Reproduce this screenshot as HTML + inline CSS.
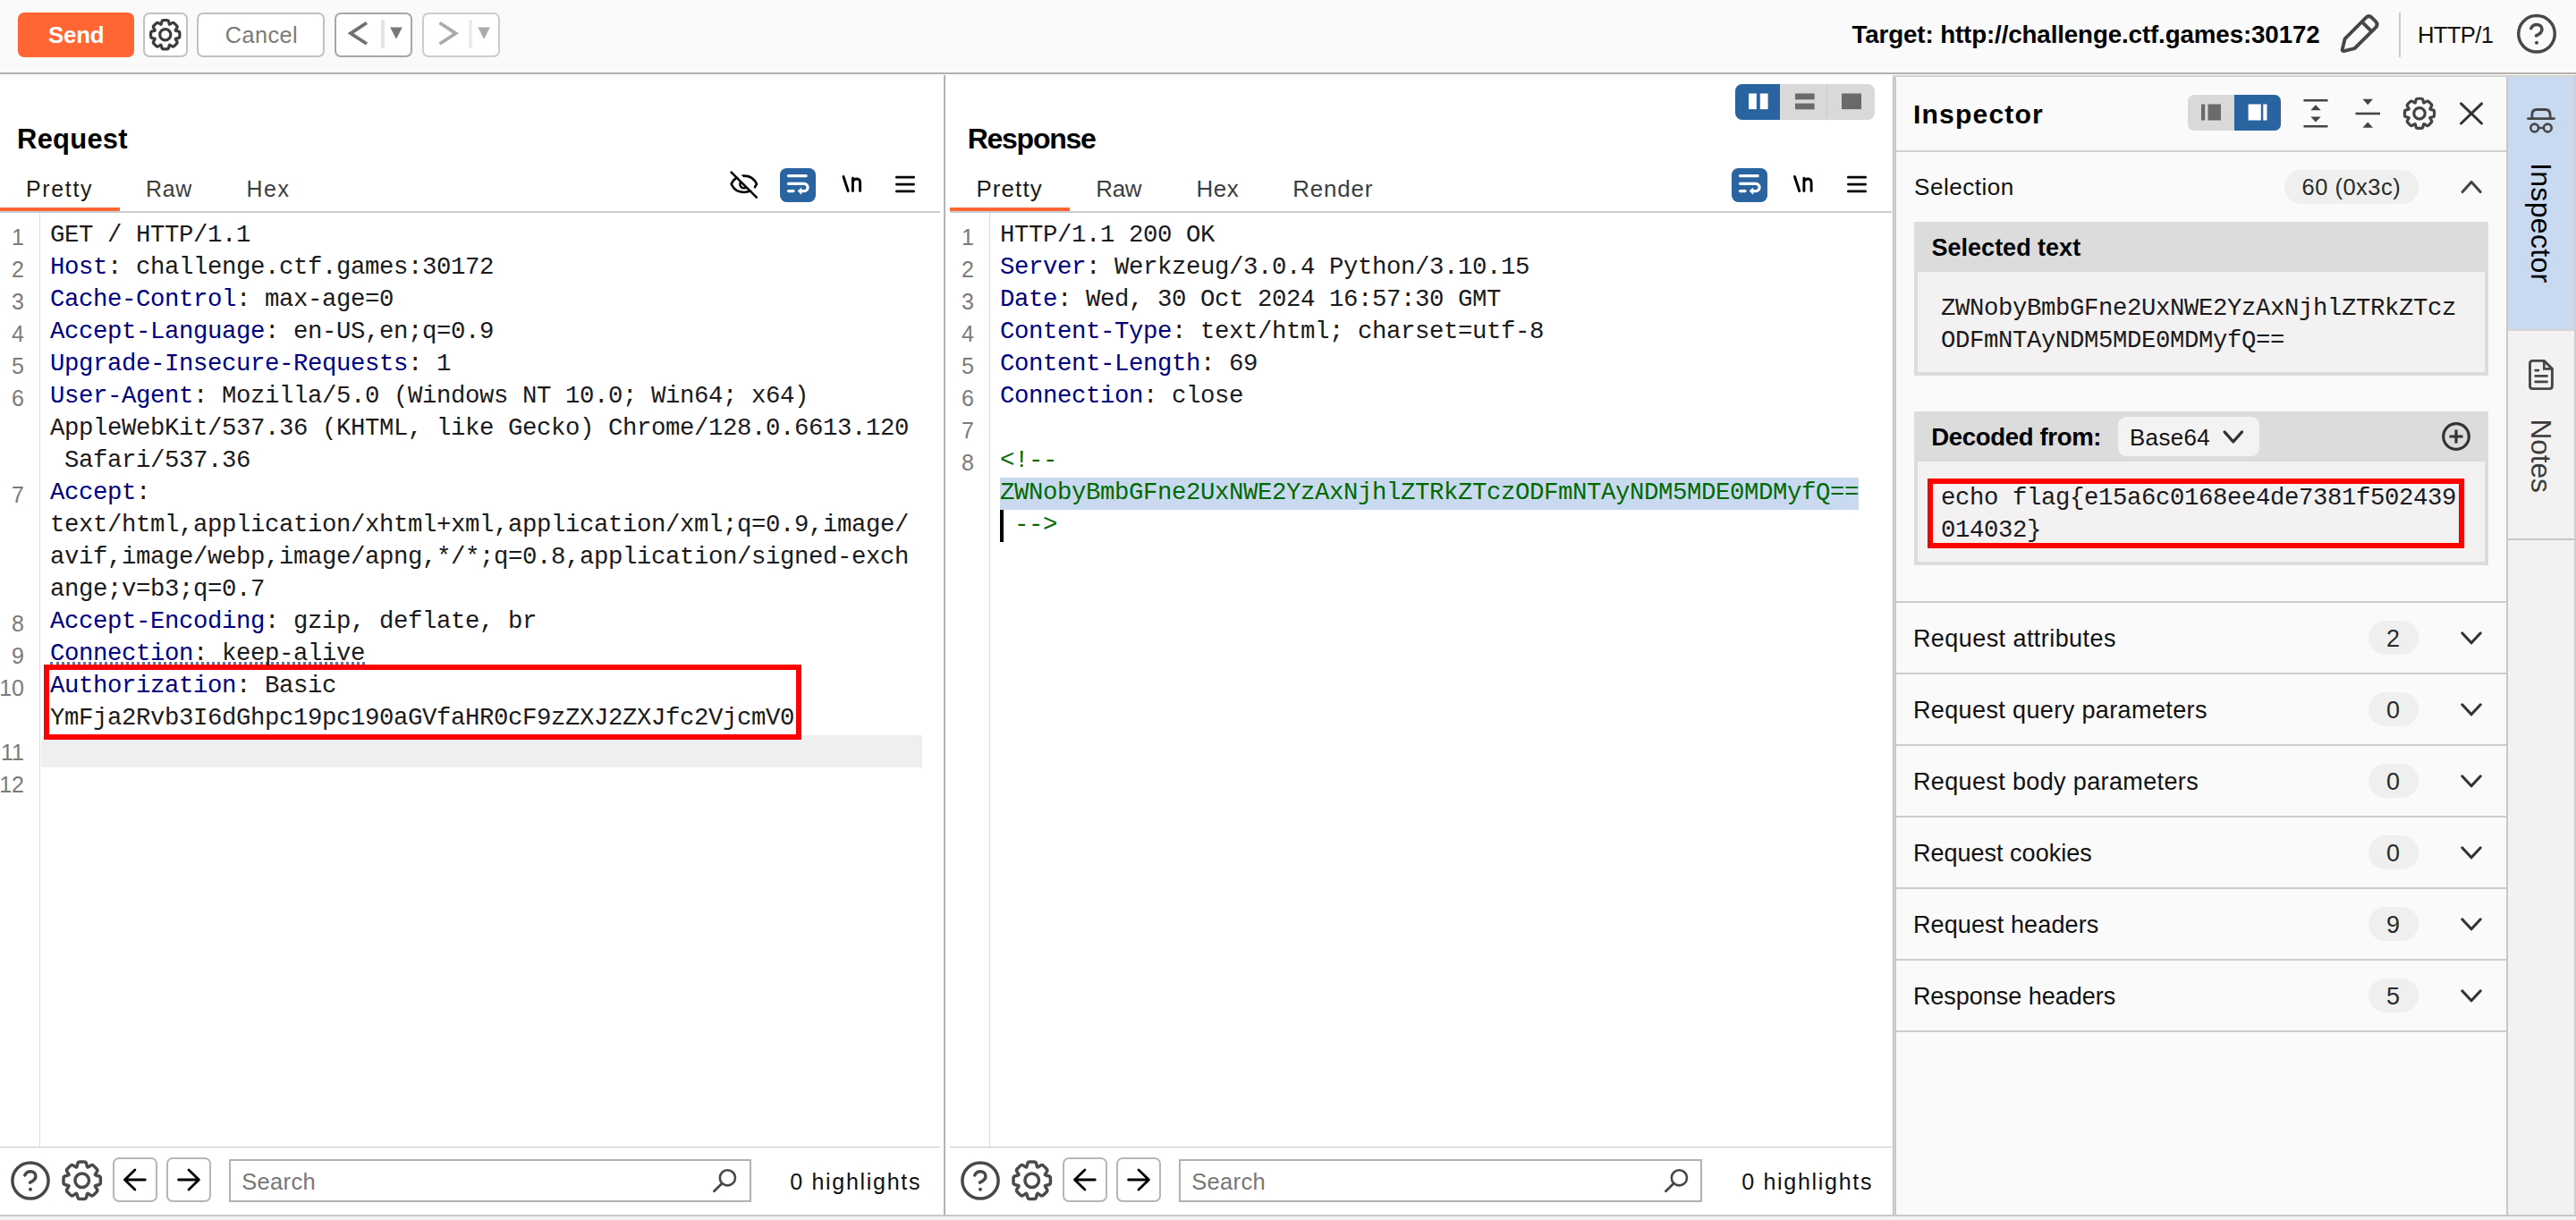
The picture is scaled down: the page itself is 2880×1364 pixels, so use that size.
<!DOCTYPE html>
<html><head><meta charset="utf-8">
<style>
*{box-sizing:border-box;margin:0;padding:0}
html,body{width:2880px;height:1364px;overflow:hidden;background:#fff;font-family:"Liberation Sans",sans-serif;color:#000}
.a{position:absolute}
.btn{position:absolute;border:2px solid #c4c0c0;border-radius:7px;background:#fff}
svg text{font-family:"Liberation Sans",sans-serif}
#ov{position:absolute;left:0;top:0;width:2880px;height:1364px}
</style></head><body>
<!-- TOOLBAR -->
<div class="a" style="left:0;top:0;width:2880px;height:80px;background:#fafafa"></div>
<div class="a" style="left:0;top:81px;width:2880px;height:2px;background:#b5b0b0"></div>
<div class="a" style="left:20px;top:14px;width:130px;height:50px;background:#ff6633;border-radius:7px"></div>
<div class="btn" style="left:160px;top:14px;width:50px;height:50px"></div>
<div class="btn" style="left:220px;top:14px;width:143px;height:50px"></div>
<div class="btn" style="left:374px;top:14px;width:87px;height:50px;border-color:#aaa6a6"></div>
<div class="btn" style="left:472px;top:14px;width:87px;height:50px;border-color:#d0cccc"></div>
<div class="a" style="left:2682px;top:14px;width:2px;height:50px;background:#cccccc"></div>

<!-- DIVIDER -->
<div class="a" style="left:1055px;top:84px;width:2px;height:1274px;background:#b8b3b3"></div>

<!-- REQUEST -->
<div class="a" style="left:0;top:232px;width:134px;height:4px;background:#ff6633"></div>
<div class="a" style="left:0;top:236px;width:1051px;height:2px;background:#c8cdcf"></div>
<div class="a" style="left:44px;top:238px;width:1px;height:1044px;background:#dcdcdc"></div>
<div class="a" style="left:46px;top:822px;width:985px;height:36px;background:#efefef"></div>
<div class="a" style="left:56px;top:740px;width:352px;height:3px;border-top:3px dotted #6070b0"></div>
<div class="a" style="left:49px;top:743px;width:847px;height:84px;border:6px solid #ff0000"></div>
<div class="a" style="left:0;top:1282px;width:1051px;height:1px;background:#c8c8c8"></div>
<div class="btn" style="left:126px;top:1294px;width:50px;height:50px;border-color:#bab5b5"></div>
<div class="btn" style="left:186px;top:1294px;width:50px;height:50px;border-color:#bab5b5"></div>
<div class="a" style="left:256px;top:1296px;width:584px;height:48px;border:2px solid #b5b0b0;background:#fff"></div>

<!-- RESPONSE -->
<div class="a" style="left:1940px;top:94px;width:156px;height:40px;background:#d9d9d9;border-radius:8px;overflow:hidden">
  <div class="a" style="left:0;top:0;width:50px;height:40px;background:#2a64a0"></div>
  <div class="a" style="left:102px;top:0;width:1px;height:40px;background:#c8c8c8"></div>
</div>
<div class="a" style="left:1062px;top:232px;width:134px;height:4px;background:#ff6633"></div>
<div class="a" style="left:1062px;top:236px;width:1053px;height:2px;background:#c8cdcf"></div>
<div class="a" style="left:1106px;top:238px;width:1px;height:1044px;background:#dcdcdc"></div>
<div class="a" style="left:1118px;top:534px;width:960px;height:36px;background:#c9d9ef"></div>
<div class="a" style="left:1118px;top:570px;width:4px;height:36px;background:#000"></div>
<div class="a" style="left:1062px;top:1282px;width:1053px;height:1px;background:#c8c8c8"></div>
<div class="btn" style="left:1188px;top:1294px;width:50px;height:50px;border-color:#bab5b5"></div>
<div class="btn" style="left:1248px;top:1294px;width:50px;height:50px;border-color:#bab5b5"></div>
<div class="a" style="left:1318px;top:1296px;width:585px;height:48px;border:2px solid #b5b0b0;background:#fff"></div>

<!-- INSPECTOR -->
<div class="a" style="left:2119px;top:84px;width:684px;height:1274px;background:#fafafa"></div>
<div class="a" style="left:2116px;top:84px;width:1px;height:1274px;background:#bcb8b8"></div><div class="a" style="left:2117px;top:84px;width:1px;height:1274px;background:#dcdcdc"></div><div class="a" style="left:2118px;top:84px;width:2px;height:1274px;background:#c8c8cc"></div>
<div class="a" style="left:2120px;top:168px;width:683px;height:2px;background:#d0d0d0"></div>
<div class="a" style="left:2446px;top:106px;width:104px;height:40px;background:#d9d9d9;border-radius:7px;overflow:hidden">
  <div class="a" style="left:52px;top:0;width:52px;height:40px;background:#2a64a0"></div>
</div>
<div class="a" style="left:2554px;top:190px;width:150px;height:38px;background:#efefef;border-radius:19px"></div>
<div class="a" style="left:2140px;top:248px;width:642px;height:172px;background:#dcdcdc"></div>
<div class="a" style="left:2144px;top:304px;width:634px;height:112px;background:#f3f1f1"></div>
<div class="a" style="left:2140px;top:460px;width:642px;height:172px;background:#dcdcdc"></div>
<div class="a" style="left:2144px;top:516px;width:634px;height:112px;background:#f3f1f1"></div>
<div class="a" style="left:2368px;top:466px;width:158px;height:44px;background:#f4f3f3;border-radius:9px"></div>
<div class="a" style="left:2155px;top:535px;width:600px;height:78px;border:6px solid #ff0000"></div>
<div class="a" style="left:2120px;top:672px;width:683px;height:2px;background:#cccccc"></div>
<div class="a" style="left:2120px;top:752px;width:683px;height:2px;background:#cccccc"></div>
<div class="a" style="left:2120px;top:832px;width:683px;height:2px;background:#cccccc"></div>
<div class="a" style="left:2120px;top:912px;width:683px;height:2px;background:#cccccc"></div>
<div class="a" style="left:2120px;top:992px;width:683px;height:2px;background:#cccccc"></div>
<div class="a" style="left:2120px;top:1072px;width:683px;height:2px;background:#cccccc"></div>
<div class="a" style="left:2120px;top:1152px;width:683px;height:2px;background:#cccccc"></div>
<div class="a" style="left:2648px;top:694px;width:56px;height:38px;background:#efefef;border-radius:19px"></div>
<div class="a" style="left:2648px;top:774px;width:56px;height:38px;background:#efefef;border-radius:19px"></div>
<div class="a" style="left:2648px;top:854px;width:56px;height:38px;background:#efefef;border-radius:19px"></div>
<div class="a" style="left:2648px;top:934px;width:56px;height:38px;background:#efefef;border-radius:19px"></div>
<div class="a" style="left:2648px;top:1014px;width:56px;height:38px;background:#efefef;border-radius:19px"></div>
<div class="a" style="left:2648px;top:1094px;width:56px;height:38px;background:#efefef;border-radius:19px"></div>

<!-- STRIP -->
<div class="a" style="left:2802px;top:84px;width:78px;height:1274px;background:#f3f1f2"></div>
<div class="a" style="left:2802px;top:84px;width:2px;height:1274px;background:#c8c8c8"></div>
<div class="a" style="left:2878px;top:84px;width:2px;height:1274px;background:#cfcfcf"></div>
<div class="a" style="left:2804px;top:85px;width:74px;height:283px;background:#c8d9f0"></div>
<div class="a" style="left:2804px;top:368px;width:74px;height:2px;background:#d6d6d6"></div>
<div class="a" style="left:2804px;top:602px;width:74px;height:2px;background:#c8c8c8"></div>

<div class="a" style="left:2116px;top:84px;width:764px;height:2px;background:#d2d2d2"></div>
<div class="a" style="left:0;top:1358px;width:2880px;height:2px;background:#c8c8c8"></div>
<div class="a" style="left:0;top:1360px;width:2880px;height:4px;background:#f3f3f3"></div>

<svg id="ov" width="2880" height="1364" viewBox="0 0 2880 1364">
<path d="M180.04,27.37 Q180.33,27.24 180.64,25.56 L180.87,24.29 Q181.17,22.61 182.89,22.61 L186.61,22.61 Q188.33,22.61 188.63,24.29 L188.86,25.56 Q189.17,27.24 189.46,27.37 L189.46,27.37 Q189.76,27.49 191.17,26.51 L192.23,25.78 Q193.63,24.8 194.85,26.02 L197.48,28.65 Q198.7,29.87 197.72,31.27 L196.99,32.33 Q196.01,33.74 196.13,34.04 L196.13,34.04 Q196.26,34.33 197.94,34.64 L199.21,34.87 Q200.89,35.17 200.89,36.89 L200.89,40.61 Q200.89,42.33 199.21,42.63 L197.94,42.86 Q196.26,43.17 196.13,43.46 L196.13,43.46 Q196.01,43.76 196.99,45.17 L197.72,46.23 Q198.7,47.63 197.48,48.85 L194.85,51.48 Q193.63,52.7 192.23,51.72 L191.17,50.99 Q189.76,50.01 189.46,50.13 L189.46,50.13 Q189.17,50.26 188.86,51.94 L188.63,53.21 Q188.33,54.89 186.61,54.89 L182.89,54.89 Q181.17,54.89 180.87,53.21 L180.64,51.94 Q180.33,50.26 180.04,50.13 L180.04,50.13 Q179.74,50.01 178.33,50.99 L177.27,51.72 Q175.87,52.7 174.65,51.48 L172.02,48.85 Q170.8,47.63 171.78,46.23 L172.51,45.17 Q173.49,43.76 173.37,43.46 L173.37,43.46 Q173.24,43.17 171.56,42.86 L170.29,42.63 Q168.61,42.33 168.61,40.61 L168.61,36.89 Q168.61,35.17 170.29,34.87 L171.56,34.64 Q173.24,34.33 173.37,34.04 L173.37,34.04 Q173.49,33.74 172.51,32.33 L171.78,31.27 Q170.8,29.87 172.02,28.65 L174.65,26.02 Q175.87,24.8 177.27,25.78 L178.33,26.51 Q179.74,27.49 180.04,27.37 Z" fill="none" stroke="#3c3c3c" stroke-width="3.2" stroke-linejoin="round"/><circle cx="184.75" cy="38.75" r="6.08" fill="none" stroke="#3c3c3c" stroke-width="3.2"/>
<path d="M410,25.5 L392,37.3 L410,49" fill="none" stroke="#707070" stroke-width="3.8"/>
<rect x="426" y="22" width="4" height="32" fill="#e4e4e4"/>
<path d="M436.2,30.5 L449.8,30.5 L443,43.8 Z" fill="#787878"/>
<path d="M491.5,25.5 L509.5,37.3 L491.5,49" fill="none" stroke="#ababab" stroke-width="3.8"/>
<rect x="524" y="22" width="4" height="32" fill="#ececec"/>
<path d="M534.4,30.5 L547.8,30.5 L541.1,43.8 Z" fill="#ababab"/>
<g transform="translate(2636.7 39.1) rotate(45)"><path d="M-3.2,-24.3 L3.2,-24.3 Q7.7,-24.3 7.7,-19.8 L7.7,13.6 L1.2,24.2 Q0,25.6 -1.2,24.2 L-7.7,13.6 L-7.7,-19.8 Q-7.7,-24.3 -3.2,-24.3 Z" fill="none" stroke="#474747" stroke-width="3.9" stroke-linejoin="round"/><path d="M-7.7,-13.2 L7.7,-13.2" stroke="#474747" stroke-width="3.9"/></g>
<circle cx="2836" cy="37.8" r="20.3" fill="none" stroke="#484848" stroke-width="3.5"/><path d="M2829.71,31.71 C2831.33,28.26 2834.17,27.45 2836,27.45 C2839.65,27.45 2841.99,29.88 2841.99,32.93 C2841.99,36.48 2838.64,38.41 2835.49,39.93" fill="none" stroke="#484848" stroke-width="3.5" stroke-linecap="round" stroke-linejoin="round"/><circle cx="2836" cy="47.75" r="2.03" fill="#484848"/>
<path d="M817.6,205.8 C823,193.6 840.6,193.6 846,205.8 C840.6,218 823,218 817.6,205.8 Z" fill="none" stroke="#000" stroke-width="2.6" stroke-linejoin="round"/>
<path d="M819.9,190.2 L848.4,218.4" stroke="#fff" stroke-width="4.6"/>
<path d="M828.3,203.4 A4.3,4.3 0 0 0 834.6,209.2" fill="none" stroke="#000" stroke-width="2.6"/>
<path d="M817.6,192.6 L845.8,220.6" stroke="#000" stroke-width="2.6" stroke-linecap="round"/>
<rect x="872" y="188" width="40" height="38" rx="7.5" fill="#2a64a0"/><path d="M881.5,196.6 L901.2,196.6" stroke="#fff" stroke-width="3.2" stroke-linecap="round"/><path d="M881.5,205.3 L898.9,205.3 A4.15,4.15 0 0 1 898.9,213.6 L895,213.6" fill="none" stroke="#fff" stroke-width="3.2" stroke-linecap="round"/><path d="M881.5,213.6 L887,213.6" stroke="#fff" stroke-width="3.2" stroke-linecap="round"/><path d="M891.6,213.6 L896.2,209.6 L896.2,217.8 Z" fill="#fff"/>
<path d="M943,197.5 L948.2,213.5" stroke="#000" stroke-width="2.9" stroke-linecap="round"/><path d="M953.4,213.5 L953.4,199.2 M953.4,203 C954.6,199.4 961.6,198.2 961.6,204.5 L961.6,213.5" fill="none" stroke="#000" stroke-width="2.9" stroke-linecap="round" stroke-linejoin="round"/>
<path d="M1002.4,198.2 L1021.6,198.2" stroke="#000" stroke-width="2.8" stroke-linecap="round"/><path d="M1002.4,206.05 L1021.6,206.05" stroke="#000" stroke-width="2.8" stroke-linecap="round"/><path d="M1002.4,213.9 L1021.6,213.9" stroke="#000" stroke-width="2.8" stroke-linecap="round"/>
<rect x="1936" y="188" width="40" height="38" rx="7.5" fill="#2a64a0"/><path d="M1945.5,196.6 L1965.2,196.6" stroke="#fff" stroke-width="3.2" stroke-linecap="round"/><path d="M1945.5,205.3 L1962.9,205.3 A4.15,4.15 0 0 1 1962.9,213.6 L1959,213.6" fill="none" stroke="#fff" stroke-width="3.2" stroke-linecap="round"/><path d="M1945.5,213.6 L1951,213.6" stroke="#fff" stroke-width="3.2" stroke-linecap="round"/><path d="M1955.6,213.6 L1960.2,209.6 L1960.2,217.8 Z" fill="#fff"/>
<path d="M2006.5,197.5 L2011.7,213.5" stroke="#000" stroke-width="2.9" stroke-linecap="round"/><path d="M2016.9,213.5 L2016.9,199.2 M2016.9,203 C2018.1,199.4 2025.1,198.2 2025.1,204.5 L2025.1,213.5" fill="none" stroke="#000" stroke-width="2.9" stroke-linecap="round" stroke-linejoin="round"/>
<path d="M2066.4,198.2 L2085.6,198.2" stroke="#000" stroke-width="2.8" stroke-linecap="round"/><path d="M2066.4,206.05 L2085.6,206.05" stroke="#000" stroke-width="2.8" stroke-linecap="round"/><path d="M2066.4,213.9 L2085.6,213.9" stroke="#000" stroke-width="2.8" stroke-linecap="round"/>
<rect x="1955" y="104.5" width="8.8" height="17.6" fill="#fff"/><rect x="1967.8" y="104.5" width="8.8" height="17.6" fill="#fff"/>
<rect x="2007" y="104.5" width="21.6" height="6.8" fill="#6a6a6a"/><rect x="2007" y="115.6" width="21.6" height="6.7" fill="#6a6a6a"/>
<rect x="2059" y="104.5" width="22" height="17.6" fill="#6a6a6a"/>
<rect x="2461" y="116.5" width="4.2" height="18" fill="#6a6a6a"/><rect x="2468.5" y="116.5" width="14.5" height="18" fill="#6a6a6a"/>
<rect x="2513.6" y="116.5" width="14.2" height="18" fill="#fff"/><rect x="2530.3" y="116.5" width="4.2" height="18" fill="#fff"/>
<path d="M2575.5,112.3 L2602.5,112.3 M2575.5,141.3 L2602.5,141.3" stroke="#444" stroke-width="2.6"/><path d="M2583.3,123.2 L2589,117.2 L2594.7,123.2 Z M2583.3,130.5 L2589,136.5 L2594.7,130.5 Z" fill="#444"/>
<path d="M2633.5,127 L2661,127" stroke="#444" stroke-width="2.6"/><path d="M2641.5,110.8 L2653,110.8 L2647.2,117.2 Z M2641.5,142.8 L2653,142.8 L2647.2,136.4 Z" fill="#444"/>
<path d="M2700.16,115.13 Q2700.47,115 2700.78,113.27 L2701.02,111.97 Q2701.33,110.24 2703.09,110.24 L2706.91,110.24 Q2708.67,110.24 2708.98,111.97 L2709.22,113.27 Q2709.53,115 2709.84,115.13 L2709.84,115.13 Q2710.14,115.25 2711.59,114.25 L2712.67,113.5 Q2714.11,112.5 2715.36,113.74 L2718.06,116.44 Q2719.3,117.69 2718.3,119.13 L2717.55,120.21 Q2716.55,121.66 2716.67,121.96 L2716.67,121.96 Q2716.8,122.27 2718.53,122.58 L2719.83,122.82 Q2721.56,123.13 2721.56,124.89 L2721.56,128.71 Q2721.56,130.47 2719.83,130.78 L2718.53,131.02 Q2716.8,131.33 2716.67,131.64 L2716.67,131.64 Q2716.55,131.94 2717.55,133.39 L2718.3,134.47 Q2719.3,135.91 2718.06,137.16 L2715.36,139.86 Q2714.11,141.1 2712.67,140.1 L2711.59,139.35 Q2710.14,138.35 2709.84,138.47 L2709.84,138.47 Q2709.53,138.6 2709.22,140.33 L2708.98,141.63 Q2708.67,143.36 2706.91,143.36 L2703.09,143.36 Q2701.33,143.36 2701.02,141.63 L2700.78,140.33 Q2700.47,138.6 2700.16,138.47 L2700.16,138.47 Q2699.86,138.35 2698.41,139.35 L2697.33,140.1 Q2695.89,141.1 2694.64,139.86 L2691.94,137.16 Q2690.7,135.91 2691.7,134.47 L2692.45,133.39 Q2693.45,131.94 2693.33,131.64 L2693.33,131.64 Q2693.2,131.33 2691.47,131.02 L2690.17,130.78 Q2688.44,130.47 2688.44,128.71 L2688.44,124.89 Q2688.44,123.13 2690.17,122.82 L2691.47,122.58 Q2693.2,122.27 2693.33,121.96 L2693.33,121.96 Q2693.45,121.66 2692.45,120.21 L2691.7,119.13 Q2690.7,117.69 2691.94,116.44 L2694.64,113.74 Q2695.89,112.5 2697.33,113.5 L2698.41,114.25 Q2699.86,115.25 2700.16,115.13 Z" fill="none" stroke="#444" stroke-width="3.2" stroke-linejoin="round"/><circle cx="2705" cy="126.8" r="6.24" fill="none" stroke="#444" stroke-width="3.2"/>
<path d="M2751.5,115.8 L2774.5,138 M2774.5,115.8 L2751.5,138" stroke="#333" stroke-width="3" stroke-linecap="round"/>
<path d="M2753.1,214.5 L2763.1,203.5 L2773.1,214.5" fill="none" stroke="#444" stroke-width="3.1" stroke-linecap="round" stroke-linejoin="round"/>
<path d="M2487.05,482.9 L2496.8,493.9 L2506.55,482.9" fill="none" stroke="#333" stroke-width="3.2" stroke-linecap="round" stroke-linejoin="round"/>
<circle cx="2746" cy="488" r="14.3" fill="none" stroke="#333" stroke-width="3.2"/><path d="M2746,480.5 L2746,495.5 M2738.5,488 L2753.5,488" stroke="#333" stroke-width="3.2"/>
<path d="M2752.75,707.8 L2763,718.8 L2773.25,707.8" fill="none" stroke="#333" stroke-width="3.1" stroke-linecap="round" stroke-linejoin="round"/>
<path d="M2752.75,787.8 L2763,798.8 L2773.25,787.8" fill="none" stroke="#333" stroke-width="3.1" stroke-linecap="round" stroke-linejoin="round"/>
<path d="M2752.75,867.8 L2763,878.8 L2773.25,867.8" fill="none" stroke="#333" stroke-width="3.1" stroke-linecap="round" stroke-linejoin="round"/>
<path d="M2752.75,947.8 L2763,958.8 L2773.25,947.8" fill="none" stroke="#333" stroke-width="3.1" stroke-linecap="round" stroke-linejoin="round"/>
<path d="M2752.75,1027.8 L2763,1038.8 L2773.25,1027.8" fill="none" stroke="#333" stroke-width="3.1" stroke-linecap="round" stroke-linejoin="round"/>
<path d="M2752.75,1107.8 L2763,1118.8 L2773.25,1107.8" fill="none" stroke="#333" stroke-width="3.1" stroke-linecap="round" stroke-linejoin="round"/>
<path d="M2826.4,132.6 L2855.6,132.6" stroke="#474747" stroke-width="2.8" stroke-linecap="round"/><path d="M2830.9,132 L2830.9,127.5 Q2831.2,122.5 2836,122.5 L2846,122.5 Q2850.6,122.5 2851,127.5 L2851.3,132" fill="none" stroke="#474747" stroke-width="2.8"/><circle cx="2833.7" cy="143" r="4.4" fill="none" stroke="#474747" stroke-width="2.6"/><circle cx="2848.3" cy="143" r="4.4" fill="none" stroke="#474747" stroke-width="2.6"/><path d="M2838,143 L2844,143" stroke="#474747" stroke-width="2.4"/>
<path d="M2844.3,403.4 L2831.6,403.4 Q2828.5,403.4 2828.5,406.5 L2828.5,431.5 Q2828.5,434.6 2831.6,434.6 L2850.3,434.6 Q2853.4,434.6 2853.4,431.5 L2853.4,412.3 Z" fill="none" stroke="#474747" stroke-width="2.9" stroke-linejoin="round"/><path d="M2844.3,403.4 L2844.3,412.4 L2853.4,412.4" fill="none" stroke="#474747" stroke-width="2.7"/><path d="M2834.6,414.1 L2838,414.1 M2834.6,420.4 L2847.6,420.4 M2834.6,426.8 L2847.6,426.8" stroke="#474747" stroke-width="2.7" stroke-linecap="round"/>
<circle cx="34" cy="1320" r="20.1" fill="none" stroke="#484848" stroke-width="3.5"/><path d="M27.77,1313.97 C29.38,1310.55 32.19,1309.75 34,1309.75 C37.62,1309.75 39.93,1312.16 39.93,1315.18 C39.93,1318.69 36.61,1320.6 33.5,1322.11" fill="none" stroke="#484848" stroke-width="3.5" stroke-linecap="round" stroke-linejoin="round"/><circle cx="34" cy="1329.85" r="2.01" fill="#484848"/>
<path d="M85.66,1305.11 Q86.04,1304.95 86.43,1302.78 L86.72,1301.17 Q87.11,1299 89.31,1299 L94.09,1299 Q96.29,1299 96.68,1301.17 L96.97,1302.78 Q97.36,1304.95 97.74,1305.11 L97.74,1305.11 Q98.13,1305.27 99.93,1304.01 L101.28,1303.07 Q103.09,1301.82 104.65,1303.38 L108.02,1306.75 Q109.58,1308.31 108.33,1310.12 L107.39,1311.47 Q106.13,1313.27 106.29,1313.66 L106.29,1313.66 Q106.45,1314.04 108.62,1314.43 L110.23,1314.72 Q112.4,1315.11 112.4,1317.31 L112.4,1322.09 Q112.4,1324.29 110.23,1324.68 L108.62,1324.97 Q106.45,1325.36 106.29,1325.74 L106.29,1325.74 Q106.13,1326.13 107.39,1327.93 L108.33,1329.28 Q109.58,1331.09 108.02,1332.65 L104.65,1336.02 Q103.09,1337.58 101.28,1336.33 L99.93,1335.39 Q98.13,1334.13 97.74,1334.29 L97.74,1334.29 Q97.36,1334.45 96.97,1336.62 L96.68,1338.23 Q96.29,1340.4 94.09,1340.4 L89.31,1340.4 Q87.11,1340.4 86.72,1338.23 L86.43,1336.62 Q86.04,1334.45 85.66,1334.29 L85.66,1334.29 Q85.27,1334.13 83.47,1335.39 L82.12,1336.33 Q80.31,1337.58 78.75,1336.02 L75.38,1332.65 Q73.82,1331.09 75.07,1329.28 L76.01,1327.93 Q77.27,1326.13 77.11,1325.74 L77.11,1325.74 Q76.95,1325.36 74.78,1324.97 L73.17,1324.68 Q71,1324.29 71,1322.09 L71,1317.31 Q71,1315.11 73.17,1314.72 L74.78,1314.43 Q76.95,1314.04 77.11,1313.66 L77.11,1313.66 Q77.27,1313.27 76.01,1311.47 L75.07,1310.12 Q73.82,1308.31 75.38,1306.75 L78.75,1303.38 Q80.31,1301.82 82.12,1303.07 L83.47,1304.01 Q85.27,1305.27 85.66,1305.11 Z" fill="none" stroke="#4a4a4a" stroke-width="3.5" stroke-linejoin="round"/><circle cx="91.7" cy="1319.7" r="7.8" fill="none" stroke="#4a4a4a" stroke-width="3.5"/>
<path d="M162.3,1319 L139.5,1319 M150.9,1308 L139.5,1319 L150.9,1330" fill="none" stroke="#000" stroke-width="2.8" stroke-linecap="round" stroke-linejoin="round"/>
<path d="M199.6,1319 L222.4,1319 M211,1308 L222.4,1319 L211,1330" fill="none" stroke="#000" stroke-width="2.8" stroke-linecap="round" stroke-linejoin="round"/>
<circle cx="813.4" cy="1316.8" r="8.6" fill="none" stroke="#484848" stroke-width="2.6"/><path d="M807.3,1323 L798.4,1331.8" stroke="#484848" stroke-width="2.8" stroke-linecap="round"/>
<circle cx="1096" cy="1320" r="20.1" fill="none" stroke="#484848" stroke-width="3.5"/><path d="M1089.77,1313.97 C1091.38,1310.55 1094.19,1309.75 1096,1309.75 C1099.62,1309.75 1101.93,1312.16 1101.93,1315.18 C1101.93,1318.69 1098.61,1320.6 1095.5,1322.11" fill="none" stroke="#484848" stroke-width="3.5" stroke-linecap="round" stroke-linejoin="round"/><circle cx="1096" cy="1329.85" r="2.01" fill="#484848"/>
<path d="M1147.66,1305.11 Q1148.04,1304.95 1148.43,1302.78 L1148.72,1301.17 Q1149.11,1299 1151.31,1299 L1156.09,1299 Q1158.29,1299 1158.68,1301.17 L1158.97,1302.78 Q1159.36,1304.95 1159.74,1305.11 L1159.74,1305.11 Q1160.13,1305.27 1161.93,1304.01 L1163.28,1303.07 Q1165.09,1301.82 1166.65,1303.38 L1170.02,1306.75 Q1171.58,1308.31 1170.33,1310.12 L1169.39,1311.47 Q1168.13,1313.27 1168.29,1313.66 L1168.29,1313.66 Q1168.45,1314.04 1170.62,1314.43 L1172.23,1314.72 Q1174.4,1315.11 1174.4,1317.31 L1174.4,1322.09 Q1174.4,1324.29 1172.23,1324.68 L1170.62,1324.97 Q1168.45,1325.36 1168.29,1325.74 L1168.29,1325.74 Q1168.13,1326.13 1169.39,1327.93 L1170.33,1329.28 Q1171.58,1331.09 1170.02,1332.65 L1166.65,1336.02 Q1165.09,1337.58 1163.28,1336.33 L1161.93,1335.39 Q1160.13,1334.13 1159.74,1334.29 L1159.74,1334.29 Q1159.36,1334.45 1158.97,1336.62 L1158.68,1338.23 Q1158.29,1340.4 1156.09,1340.4 L1151.31,1340.4 Q1149.11,1340.4 1148.72,1338.23 L1148.43,1336.62 Q1148.04,1334.45 1147.66,1334.29 L1147.66,1334.29 Q1147.27,1334.13 1145.47,1335.39 L1144.12,1336.33 Q1142.31,1337.58 1140.75,1336.02 L1137.38,1332.65 Q1135.82,1331.09 1137.07,1329.28 L1138.01,1327.93 Q1139.27,1326.13 1139.11,1325.74 L1139.11,1325.74 Q1138.95,1325.36 1136.78,1324.97 L1135.17,1324.68 Q1133,1324.29 1133,1322.09 L1133,1317.31 Q1133,1315.11 1135.17,1314.72 L1136.78,1314.43 Q1138.95,1314.04 1139.11,1313.66 L1139.11,1313.66 Q1139.27,1313.27 1138.01,1311.47 L1137.07,1310.12 Q1135.82,1308.31 1137.38,1306.75 L1140.75,1303.38 Q1142.31,1301.82 1144.12,1303.07 L1145.47,1304.01 Q1147.27,1305.27 1147.66,1305.11 Z" fill="none" stroke="#4a4a4a" stroke-width="3.5" stroke-linejoin="round"/><circle cx="1153.7" cy="1319.7" r="7.8" fill="none" stroke="#4a4a4a" stroke-width="3.5"/>
<path d="M1224.3,1319 L1201.5,1319 M1212.9,1308 L1201.5,1319 L1212.9,1330" fill="none" stroke="#000" stroke-width="2.8" stroke-linecap="round" stroke-linejoin="round"/>
<path d="M1261.6,1319 L1284.4,1319 M1273,1308 L1284.4,1319 L1273,1330" fill="none" stroke="#000" stroke-width="2.8" stroke-linecap="round" stroke-linejoin="round"/>
<circle cx="1877.4" cy="1316.8" r="8.6" fill="none" stroke="#484848" stroke-width="2.6"/><path d="M1871.3,1323 L1862.4,1331.8" stroke="#484848" stroke-width="2.8" stroke-linecap="round"/>
<text x="54.1" y="48" fill="#fff" style="font-size:25.87px;letter-spacing:-0.23px;font-weight:bold">Send</text>
<text x="251.82" y="48" fill="#7a7a7a" style="font-size:25.19px;letter-spacing:0.49px;font-weight:normal">Cancel</text>
<text x="2070.5" y="48.1" fill="#000" style="font-size:27.73px;letter-spacing:-0.12px;font-weight:bold">Target: http://challenge.ctf.games:30172</text>
<text x="2703" y="47.8" fill="#111" style="font-size:25.6px;letter-spacing:-0.63px;font-weight:normal">HTTP/1</text>
<text x="19.07" y="165.5" fill="#000" style="font-size:30.93px;letter-spacing:0.26px;font-weight:bold">Request</text>
<text x="29.06" y="220" fill="#1a1a1a" style="font-size:24.89px;letter-spacing:1.69px;font-weight:normal">Pretty</text>
<text x="163.06" y="220" fill="#3d3d3d" style="font-size:24.89px;letter-spacing:0.68px;font-weight:normal">Raw</text>
<text x="275.56" y="220" fill="#3d3d3d" style="font-size:24.89px;letter-spacing:1.59px;font-weight:normal">Hex</text>
<text x="1081.7" y="166.2" fill="#000" style="font-size:32px;letter-spacing:-1.26px;font-weight:bold">Response</text>
<text x="1091.38" y="220.2" fill="#1a1a1a" style="font-size:25.88px;letter-spacing:1.16px;font-weight:normal">Pretty</text>
<text x="1225.28" y="220.2" fill="#3d3d3d" style="font-size:25.88px;letter-spacing:-0.29px;font-weight:normal">Raw</text>
<text x="1337.48" y="220.2" fill="#3d3d3d" style="font-size:25.88px;letter-spacing:0.6px;font-weight:normal">Hex</text>
<text x="1445.18" y="220.2" fill="#3d3d3d" style="font-size:25.88px;letter-spacing:0.85px;font-weight:normal">Render</text>
<text x="270.2" y="1330" fill="#777" style="font-size:25.46px;letter-spacing:0.37px;font-weight:normal">Search</text>
<text x="883.22" y="1329.6" fill="#111" style="font-size:25.03px;letter-spacing:1.7px;font-weight:normal">0 highlights</text>
<text x="1332.2" y="1330" fill="#777" style="font-size:25.46px;letter-spacing:0.37px;font-weight:normal">Search</text>
<text x="1947.22" y="1329.6" fill="#111" style="font-size:25.03px;letter-spacing:1.7px;font-weight:normal">0 highlights</text>
<text x="2138.92" y="137.7" fill="#000" style="font-size:30.15px;letter-spacing:1.15px;font-weight:bold">Inspector</text>
<text x="2139.98" y="218" fill="#111" style="font-size:26.17px;letter-spacing:0.48px;font-weight:normal">Selection</text>
<text x="2573.61" y="217.8" fill="#2a2a2a" style="font-size:25.46px;letter-spacing:0.49px;font-weight:normal">60 (0x3c)</text>
<text x="2159.58" y="286" fill="#000" style="font-size:27.02px;letter-spacing:-0.01px;font-weight:bold">Selected text</text>
<text x="2159.28" y="497.7" fill="#000" style="font-size:27.59px;letter-spacing:-0.36px;font-weight:bold">Decoded from:</text>
<text x="2380.98" y="497.7" fill="#111" style="font-size:25.88px;letter-spacing:0.38px;font-weight:normal">Base64</text>
<text x="2138.89" y="722.6" fill="#111" style="font-size:27.02px;letter-spacing:0.43px;font-weight:normal">Request attributes</text>
<text x="2138.89" y="802.6" fill="#111" style="font-size:27.02px;letter-spacing:0.38px;font-weight:normal">Request query parameters</text>
<text x="2138.89" y="882.6" fill="#111" style="font-size:27.02px;letter-spacing:0.36px;font-weight:normal">Request body parameters</text>
<text x="2138.89" y="962.6" fill="#111" style="font-size:27.02px;letter-spacing:0.01px;font-weight:normal">Request cookies</text>
<text x="2138.89" y="1042.6" fill="#111" style="font-size:27.02px;letter-spacing:0.12px;font-weight:normal">Request headers</text>
<text x="2138.89" y="1122.6" fill="#111" style="font-size:27.02px;letter-spacing:-0.03px;font-weight:normal">Response headers</text>
<text transform="translate(2829.5 182) rotate(90)" x="0" y="0" fill="#000" style="font-size:32px;letter-spacing:0.32px;font-weight:normal">Inspector</text>
<text transform="translate(2829.9 468.42) rotate(90)" x="0" y="0" fill="#3c3c3c" style="font-size:31.72px;letter-spacing:-0.12px;font-weight:normal">Notes</text>
<text x="2667.9" y="722.6" fill="#2a2a2a" style="font-size:27.02px">2</text>
<text x="2667.9" y="802.6" fill="#2a2a2a" style="font-size:27.02px">0</text>
<text x="2667.9" y="882.6" fill="#2a2a2a" style="font-size:27.02px">0</text>
<text x="2667.9" y="962.6" fill="#2a2a2a" style="font-size:27.02px">0</text>
<text x="2667.9" y="1042.6" fill="#2a2a2a" style="font-size:27.02px">9</text>
<text x="2668.11" y="1122.6" fill="#2a2a2a" style="font-size:27.02px">5</text>
<text x="2170" y="352" style="font-family:'Liberation Mono';font-size:27.3px;letter-spacing:-0.38px" xml:space="preserve"><tspan fill="#1a1a1a">ZWNobyBmbGFne2UxNWE2YzAxNjhlZTRkZTcz</tspan></text>
<text x="2170" y="388" style="font-family:'Liberation Mono';font-size:27.3px;letter-spacing:-0.38px" xml:space="preserve"><tspan fill="#1a1a1a">ODFmNTAyNDM5MDE0MDMyfQ==</tspan></text>
<text x="2170" y="563.5" style="font-family:'Liberation Mono';font-size:27.3px;letter-spacing:-0.38px" xml:space="preserve"><tspan fill="#1a1a1a">echo flag{e15a6c0168ee4de7381f502439</tspan></text>
<text x="2170" y="599.5" style="font-family:'Liberation Mono';font-size:27.3px;letter-spacing:-0.38px" xml:space="preserve"><tspan fill="#1a1a1a">014032}</tspan></text>
<text x="27" y="274" text-anchor="end" fill="#7b7b7b" style="font-size:25px">1</text>
<text x="56" y="269.5" style="font-family:'Liberation Mono';font-size:27.3px;letter-spacing:-0.38px" xml:space="preserve"><tspan fill="#1a1a1a">GET / HTTP/1.1</tspan></text>
<text x="27" y="310" text-anchor="end" fill="#7b7b7b" style="font-size:25px">2</text>
<text x="56" y="305.5" style="font-family:'Liberation Mono';font-size:27.3px;letter-spacing:-0.38px" xml:space="preserve"><tspan fill="#000080">Host</tspan><tspan fill="#1a1a1a">: challenge.ctf.games:30172</tspan></text>
<text x="27" y="346" text-anchor="end" fill="#7b7b7b" style="font-size:25px">3</text>
<text x="56" y="341.5" style="font-family:'Liberation Mono';font-size:27.3px;letter-spacing:-0.38px" xml:space="preserve"><tspan fill="#000080">Cache-Control</tspan><tspan fill="#1a1a1a">: max-age=0</tspan></text>
<text x="27" y="382" text-anchor="end" fill="#7b7b7b" style="font-size:25px">4</text>
<text x="56" y="377.5" style="font-family:'Liberation Mono';font-size:27.3px;letter-spacing:-0.38px" xml:space="preserve"><tspan fill="#000080">Accept-Language</tspan><tspan fill="#1a1a1a">: en-US,en;q=0.9</tspan></text>
<text x="27" y="418" text-anchor="end" fill="#7b7b7b" style="font-size:25px">5</text>
<text x="56" y="413.5" style="font-family:'Liberation Mono';font-size:27.3px;letter-spacing:-0.38px" xml:space="preserve"><tspan fill="#000080">Upgrade-Insecure-Requests</tspan><tspan fill="#1a1a1a">: 1</tspan></text>
<text x="27" y="454" text-anchor="end" fill="#7b7b7b" style="font-size:25px">6</text>
<text x="56" y="449.5" style="font-family:'Liberation Mono';font-size:27.3px;letter-spacing:-0.38px" xml:space="preserve"><tspan fill="#000080">User-Agent</tspan><tspan fill="#1a1a1a">: Mozilla/5.0 (Windows NT 10.0; Win64; x64)</tspan></text>
<text x="56" y="485.5" style="font-family:'Liberation Mono';font-size:27.3px;letter-spacing:-0.38px" xml:space="preserve"><tspan fill="#1a1a1a">AppleWebKit/537.36 (KHTML, like Gecko) Chrome/128.0.6613.120</tspan></text>
<text x="56" y="521.5" style="font-family:'Liberation Mono';font-size:27.3px;letter-spacing:-0.38px" xml:space="preserve"><tspan fill="#1a1a1a"> Safari/537.36</tspan></text>
<text x="27" y="562" text-anchor="end" fill="#7b7b7b" style="font-size:25px">7</text>
<text x="56" y="557.5" style="font-family:'Liberation Mono';font-size:27.3px;letter-spacing:-0.38px" xml:space="preserve"><tspan fill="#000080">Accept</tspan><tspan fill="#1a1a1a">:</tspan></text>
<text x="56" y="593.5" style="font-family:'Liberation Mono';font-size:27.3px;letter-spacing:-0.38px" xml:space="preserve"><tspan fill="#1a1a1a">text/html,application/xhtml+xml,application/xml;q=0.9,image/</tspan></text>
<text x="56" y="629.5" style="font-family:'Liberation Mono';font-size:27.3px;letter-spacing:-0.38px" xml:space="preserve"><tspan fill="#1a1a1a">avif,image/webp,image/apng,*/*;q=0.8,application/signed-exch</tspan></text>
<text x="56" y="665.5" style="font-family:'Liberation Mono';font-size:27.3px;letter-spacing:-0.38px" xml:space="preserve"><tspan fill="#1a1a1a">ange;v=b3;q=0.7</tspan></text>
<text x="27" y="706" text-anchor="end" fill="#7b7b7b" style="font-size:25px">8</text>
<text x="56" y="701.5" style="font-family:'Liberation Mono';font-size:27.3px;letter-spacing:-0.38px" xml:space="preserve"><tspan fill="#000080">Accept-Encoding</tspan><tspan fill="#1a1a1a">: gzip, deflate, br</tspan></text>
<text x="27" y="742" text-anchor="end" fill="#7b7b7b" style="font-size:25px">9</text>
<text x="56" y="737.5" style="font-family:'Liberation Mono';font-size:27.3px;letter-spacing:-0.38px" xml:space="preserve"><tspan fill="#000080">Connection</tspan><tspan fill="#1a1a1a">: keep-alive</tspan></text>
<text x="27" y="778" text-anchor="end" fill="#7b7b7b" style="font-size:25px">10</text>
<text x="56" y="773.5" style="font-family:'Liberation Mono';font-size:27.3px;letter-spacing:-0.38px" xml:space="preserve"><tspan fill="#000080">Authorization</tspan><tspan fill="#1a1a1a">: Basic</tspan></text>
<text x="56" y="809.5" style="font-family:'Liberation Mono';font-size:27.3px;letter-spacing:-0.38px" xml:space="preserve"><tspan fill="#1a1a1a">YmFja2Rvb3I6dGhpc19pc190aGVfaHR0cF9zZXJ2ZXJfc2VjcmV0</tspan></text>
<text x="27" y="850" text-anchor="end" fill="#7b7b7b" style="font-size:25px">11</text>
<text x="27" y="886" text-anchor="end" fill="#7b7b7b" style="font-size:25px">12</text>
<text x="1089" y="274" text-anchor="end" fill="#7b7b7b" style="font-size:25px">1</text>
<text x="1118" y="269.5" style="font-family:'Liberation Mono';font-size:27.3px;letter-spacing:-0.38px" xml:space="preserve"><tspan fill="#1a1a1a">HTTP/1.1 200 OK</tspan></text>
<text x="1089" y="310" text-anchor="end" fill="#7b7b7b" style="font-size:25px">2</text>
<text x="1118" y="305.5" style="font-family:'Liberation Mono';font-size:27.3px;letter-spacing:-0.38px" xml:space="preserve"><tspan fill="#000080">Server</tspan><tspan fill="#1a1a1a">: Werkzeug/3.0.4 Python/3.10.15</tspan></text>
<text x="1089" y="346" text-anchor="end" fill="#7b7b7b" style="font-size:25px">3</text>
<text x="1118" y="341.5" style="font-family:'Liberation Mono';font-size:27.3px;letter-spacing:-0.38px" xml:space="preserve"><tspan fill="#000080">Date</tspan><tspan fill="#1a1a1a">: Wed, 30 Oct 2024 16:57:30 GMT</tspan></text>
<text x="1089" y="382" text-anchor="end" fill="#7b7b7b" style="font-size:25px">4</text>
<text x="1118" y="377.5" style="font-family:'Liberation Mono';font-size:27.3px;letter-spacing:-0.38px" xml:space="preserve"><tspan fill="#000080">Content-Type</tspan><tspan fill="#1a1a1a">: text/html; charset=utf-8</tspan></text>
<text x="1089" y="418" text-anchor="end" fill="#7b7b7b" style="font-size:25px">5</text>
<text x="1118" y="413.5" style="font-family:'Liberation Mono';font-size:27.3px;letter-spacing:-0.38px" xml:space="preserve"><tspan fill="#000080">Content-Length</tspan><tspan fill="#1a1a1a">: 69</tspan></text>
<text x="1089" y="454" text-anchor="end" fill="#7b7b7b" style="font-size:25px">6</text>
<text x="1118" y="449.5" style="font-family:'Liberation Mono';font-size:27.3px;letter-spacing:-0.38px" xml:space="preserve"><tspan fill="#000080">Connection</tspan><tspan fill="#1a1a1a">: close</tspan></text>
<text x="1089" y="490" text-anchor="end" fill="#7b7b7b" style="font-size:25px">7</text>
<text x="1089" y="526" text-anchor="end" fill="#7b7b7b" style="font-size:25px">8</text>
<text x="1118" y="521.5" style="font-family:'Liberation Mono';font-size:27.3px;letter-spacing:-0.38px" xml:space="preserve"><tspan fill="#006a00">&lt;!--</tspan></text>
<text x="1118" y="557.5" style="font-family:'Liberation Mono';font-size:27.3px;letter-spacing:-0.38px" xml:space="preserve"><tspan fill="#006a00">ZWNobyBmbGFne2UxNWE2YzAxNjhlZTRkZTczODFmNTAyNDM5MDE0MDMyfQ==</tspan></text>
<text x="1118" y="593.5" style="font-family:'Liberation Mono';font-size:27.3px;letter-spacing:-0.38px" xml:space="preserve"><tspan fill="#006a00"> --&gt;</tspan></text>
</svg>
</body></html>
